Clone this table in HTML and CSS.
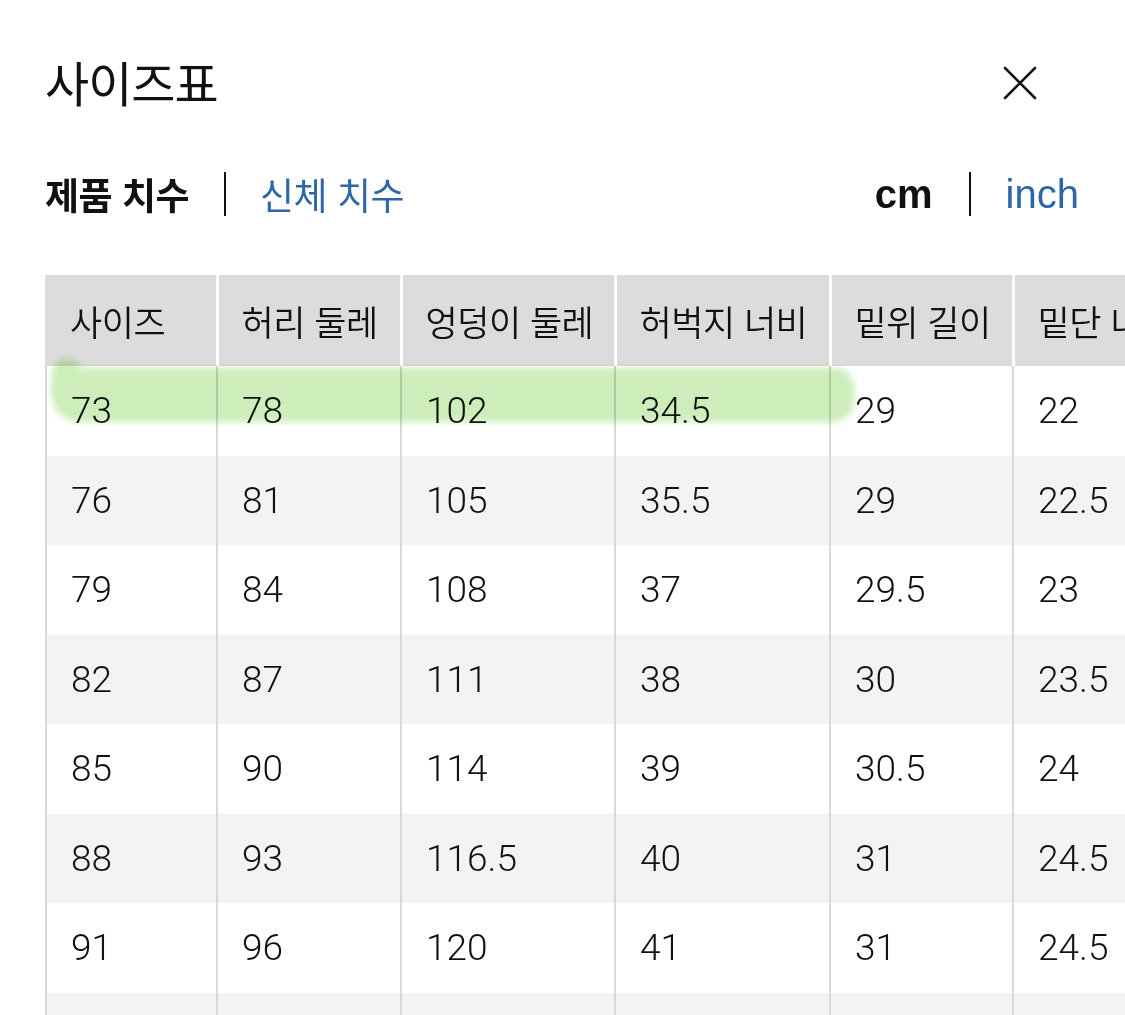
FILE: index.html
```html
<!DOCTYPE html>
<html lang="ko">
<head>
<meta charset="utf-8">
<title>사이즈표</title>
<link rel="stylesheet" href="styles.css">
</head>
<body>
<div class="sheet">
  <header class="top">
    <h1 class="title">사이즈표</h1>
    <button class="close" aria-label="닫기">
      <svg width="34" height="34" viewBox="0 0 34 34"><path d="M2 2 L32 32 M32 2 L2 32" stroke="#111" stroke-width="2.6" stroke-linecap="round" fill="none"/></svg>
    </button>
  </header>
  <nav class="tabs">
    <div class="group">
      <span class="tab active">제품 치수</span>
      <span class="sep"></span>
      <span class="tab link">신체 치수</span>
    </div>
    <div class="group units">
      <span class="unit active">cm</span>
      <span class="sep"></span>
      <span class="unit link">inch</span>
    </div>
  </nav>
  <div class="table-wrap">
    <table class="size">
      <colgroup>
        <col class="c1"><col class="c2"><col class="c3"><col class="c4"><col class="c5"><col class="c6">
      </colgroup>
      <thead>
        <tr><th>사이즈</th><th>허리 둘레</th><th>엉덩이 둘레</th><th>허벅지 너비</th><th>밑위 길이</th><th>밑단 너비</th></tr>
      </thead>
      <tbody>
        <tr><td>73</td><td>78</td><td>102</td><td>34.5</td><td>29</td><td>22</td></tr>
        <tr><td>76</td><td>81</td><td>105</td><td>35.5</td><td>29</td><td>22.5</td></tr>
        <tr><td>79</td><td>84</td><td>108</td><td>37</td><td>29.5</td><td>23</td></tr>
        <tr><td>82</td><td>87</td><td>111</td><td>38</td><td>30</td><td>23.5</td></tr>
        <tr><td>85</td><td>90</td><td>114</td><td>39</td><td>30.5</td><td>24</td></tr>
        <tr><td>88</td><td>93</td><td>116.5</td><td>40</td><td>31</td><td>24.5</td></tr>
        <tr><td>91</td><td>96</td><td>120</td><td>41</td><td>31</td><td>24.5</td></tr>
        <tr class="next"><td></td><td></td><td></td><td></td><td></td><td></td></tr>
      </tbody>
    </table>
    <div class="highlight"></div>
  </div>
</div>
</body>
</html>
```
FILE: styles.css
```css
html, body {
  margin: 0;
  padding: 0;
  background: #fff;
  overflow: hidden;
}
body {
  width: 1125px;
  height: 1015px;
  font-family: "Noto Sans CJK KR", "Liberation Sans", sans-serif;
  color: #111;
}
.sheet {
  padding: 0 0 0 45px;
}
.top {
  display: flex;
  align-items: center;
  justify-content: space-between;
  height: 72px;
  padding-top: 45px;
  padding-right: 88px;
}
.title {
  margin: 0;
  font-size: 48px;
  font-weight: 400;
  line-height: 1;
  letter-spacing: -1px;
}
.close {
  border: 0;
  background: none;
  padding: 0;
  width: 34px;
  height: 34px;
  display: flex;
  margin-top: 3px;
}
.tabs {
  display: flex;
  justify-content: space-between;
  align-items: center;
  margin-top: 52px;
  height: 50px;
  padding-right: 46px;
}
.group {
  display: flex;
  align-items: center;
}
.tab {
  font-size: 37px;
  line-height: 1;
  letter-spacing: -0.5px;
}
.tab.active {
  font-weight: 700;
}
.link {
  color: #2d66aa;
}
.sep {
  width: 2px;
  height: 44px;
  background: #111;
  margin: 0 34px 0 35px;
}
.units .sep {
  margin: 0 35px 0 36px;
}
.unit {
  font-family: "Liberation Sans", sans-serif;
  font-size: 40px;
  line-height: 1;
}
.unit.active {
  font-weight: 700;
}
.table-wrap {
  position: relative;
  margin-top: 56px;
}
.size {
  border-collapse: collapse;
  table-layout: fixed;
  width: 1167px;
}
.c1 { width: 171px; }
.c2 { width: 184px; }
.c3 { width: 214px; }
.c4 { width: 215px; }
.c5 { width: 183px; }
.c6 { width: 200px; }
.size th {
  height: 91px;
  padding: 0 0 0 23px;
  background: #dcdcdc;
  border-left: 3px solid #fff;
  text-align: left;
  font-weight: 350;
  font-size: 35px;
  letter-spacing: -0.5px;
  white-space: nowrap;
  overflow: hidden;
  vertical-align: middle;
  box-sizing: border-box;
}
.size th:first-child {
  border-left: 2px solid #dcdcdc;
}
.size td {
  height: 89.5px;
  padding: 0 0 0 24px;
  border-left: 2px solid #d9d9d9;
  font-family: Roboto, "Liberation Sans", sans-serif;
  font-weight: 300;
  font-size: 37px;
  color: #111;
  vertical-align: middle;
  box-sizing: border-box;
}
.size tbody tr:nth-child(even) td {
  background: #f3f3f3;
}
.highlight {
  position: absolute;
  left: 6px;
  top: 93px;
  width: 803px;
  height: 54px;
  background: #cdeebb;
  mix-blend-mode: multiply;
  border-radius: 12px 18px 22px 28px / 10px 20px 20px 30px;
  filter: blur(3px);
}
.highlight::before {
  content: "";
  position: absolute;
  left: 2px;
  top: -9px;
  width: 28px;
  height: 20px;
  background: #cdeebb;
  border-radius: 50% 50% 0 0;
}
```
